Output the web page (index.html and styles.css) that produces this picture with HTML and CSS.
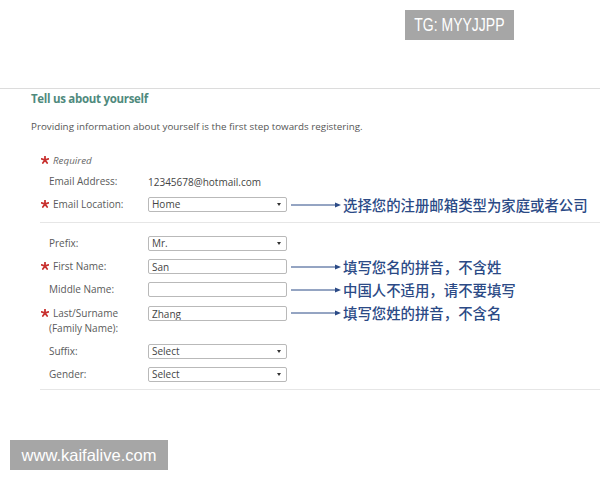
FILE: index.html
```html
<!DOCTYPE html>
<html lang="en">
<head>
    <meta charset="UTF-8">
    <title>Tell us about yourself</title>
    <link rel="stylesheet" href="styles.css">
</head>
<body>
    <div class="badge badge-tg"><span class="narrow">TG: MYYJJPP</span></div>

    <section class="panel">
        <h2 class="title">Tell us about yourself</h2>
        <p class="intro">Providing information about yourself is the first step towards registering.</p>

        <div class="group">
            <div class="row row-first">
                <span class="label req"><svg class="star" viewBox="0 0 10 10"><path d="M5 0.5 L5 5 M5 5 L9.3 3.6 M5 5 L7.7 8.8 M5 5 L2.3 8.8 M5 5 L0.7 3.6"/></svg><em class="note-required">Required</em></span>
            </div>
            <div class="row">
                <span class="label">Email Address:</span>
                <span class="value">12345678@hotmail.com</span>
            </div>
            <div class="row">
                <span class="label req"><svg class="star" viewBox="0 0 10 10"><path d="M5 0.5 L5 5 M5 5 L9.3 3.6 M5 5 L7.7 8.8 M5 5 L2.3 8.8 M5 5 L0.7 3.6"/></svg>Email Location:</span>
                <div class="select">Home<span class="caret"></span></div>
                <div class="hint">
                    <svg class="arrow" viewBox="0 0 50 8"><path d="M0 4 H46"/><path class="head" d="M44 1.5 L50 4 L44 6.5 Z"/></svg>
                    <span>选择您的注册邮箱类型为家庭或者公司</span>
                </div>
            </div>
        </div>

        <div class="group group-names">
            <div class="row">
                <span class="label">Prefix:</span>
                <div class="select">Mr.<span class="caret"></span></div>
            </div>
            <div class="row">
                <span class="label req"><svg class="star" viewBox="0 0 10 10"><path d="M5 0.5 L5 5 M5 5 L9.3 3.6 M5 5 L7.7 8.8 M5 5 L2.3 8.8 M5 5 L0.7 3.6"/></svg>First Name:</span>
                <input class="field" type="text" value="San">
                <div class="hint">
                    <svg class="arrow" viewBox="0 0 50 8"><path d="M0 4 H46"/><path class="head" d="M44 1.5 L50 4 L44 6.5 Z"/></svg>
                    <span>填写您名的拼音，不含姓</span>
                </div>
            </div>
            <div class="row">
                <span class="label">Middle Name:</span>
                <input class="field" type="text" value="">
                <div class="hint">
                    <svg class="arrow" viewBox="0 0 50 8"><path d="M0 4 H46"/><path class="head" d="M44 1.5 L50 4 L44 6.5 Z"/></svg>
                    <span>中国人不适用，请不要填写</span>
                </div>
            </div>
            <div class="row row-tall">
                <span class="label req"><svg class="star" viewBox="0 0 10 10"><path d="M5 0.5 L5 5 M5 5 L9.3 3.6 M5 5 L7.7 8.8 M5 5 L2.3 8.8 M5 5 L0.7 3.6"/></svg><span>Last/Surname<br><span class="outdent">(Family Name):</span></span></span>
                <input class="field" type="text" value="Zhang">
                <div class="hint">
                    <svg class="arrow" viewBox="0 0 50 8"><path d="M0 4 H46"/><path class="head" d="M44 1.5 L50 4 L44 6.5 Z"/></svg>
                    <span>填写您姓的拼音，不含名</span>
                </div>
            </div>
            <div class="row">
                <span class="label">Suffix:</span>
                <div class="select">Select<span class="caret"></span></div>
            </div>
            <div class="row">
                <span class="label">Gender:</span>
                <div class="select">Select<span class="caret"></span></div>
            </div>
        </div>
    </section>

    <div class="badge badge-site">www.kaifalive.com</div>
</body>
</html>
```

FILE: styles.css
```css
* {
    box-sizing: border-box;
    margin: 0;
    padding: 0;
}

body {
    font-family: "Open Sans", "Noto Sans", sans-serif;
    background: #fff;
    color: #555;
    width: 600px;
    height: 480px;
    position: relative;
    overflow: hidden;
}

.badge {
    position: absolute;
    background: #a6a6a6;
    color: #fff;
    font-family: "Liberation Sans", Arial, sans-serif;
    white-space: nowrap;
    display: flex;
    align-items: center;
    justify-content: center;
}
.badge-tg {
    top: 10px;
    left: 405px;
    width: 109px;
    height: 30px;
    font-size: 17.5px;
}
.narrow {
    display: inline-block;
    transform: scaleX(0.8);
}
.badge-site {
    top: 440px;
    left: 10px;
    width: 158px;
    height: 30px;
    font-size: 16.5px;
}

.panel {
    margin-top: 88px;
    border-top: 1px solid #dcdcdc;
}
.title {
    font-size: 11.5px;
    letter-spacing: -0.3px;
    line-height: 16px;
    font-weight: 700;
    color: #4f8a7d;
    margin: 2px 0 0 31px;
}
.intro {
    font-size: 9.8px;
    line-height: 14px;
    margin: 13px 0 0 31px;
}

.group {
    margin: 16px 0 0 40px;
    padding-bottom: 6px;
    border-bottom: 1px solid #e6e6e6;
}
.group-names {
    margin-top: 9px;
    padding-bottom: 3px;
}

.row {
    display: flex;
    align-items: center;
    height: 23px;
}
.row-first {
    height: 20px;
}
.row-tall {
    height: auto;
    align-items: flex-start;
    padding: 5px 0 4px;
}

.label {
    width: 108px;
    flex-shrink: 0;
    padding-left: 9px;
    font-size: 10px;
    line-height: 15px;
    color: #5a5a5a;
    display: flex;
    align-items: flex-start;
}
.label.req {
    padding-left: 1px;
}
.outdent {
    display: inline-block;
    margin-left: -4px;
}
.star {
    width: 8px;
    height: 8px;
    margin: 3px 4px 0 0;
    flex-shrink: 0;
    fill: none;
    stroke: #c8312f;
    stroke-width: 2.2;
    stroke-linecap: round;
}
.note-required {
    font-size: 9.8px;
    color: #666;
}

.value {
    font-size: 10px;
    color: #444;
}

.select,
.field {
    width: 139px;
    height: 15px;
    flex-shrink: 0;
    border: 1px solid #b9b9b9;
    border-radius: 2px;
    background: #fff;
    font-family: "Open Sans", "Noto Sans", sans-serif;
    font-size: 10px;
    line-height: 13px;
    color: #444;
    padding: 0 3px;
}
.select {
    display: flex;
    align-items: center;
    justify-content: space-between;
}
.caret {
    width: 0;
    height: 0;
    margin-right: 2px;
    border-left: 2.5px solid transparent;
    border-right: 2.5px solid transparent;
    border-top: 3px solid #333;
}
.field {
    outline: none;
}

.hint {
    display: flex;
    align-items: center;
    margin-left: 4px;
    color: #2b4a86;
    font-family: "Noto Sans CJK SC", sans-serif;
    font-size: 14.4px;
    font-weight: 500;
    line-height: 16px;
}
.row-tall .hint {
    margin-top: -1px;
}
.arrow {
    width: 50px;
    height: 8px;
    margin-right: 2px;
    stroke: #2b4a86;
    stroke-width: 1;
    fill: none;
}
.arrow .head {
    fill: #2b4a86;
    stroke: none;
}
```
